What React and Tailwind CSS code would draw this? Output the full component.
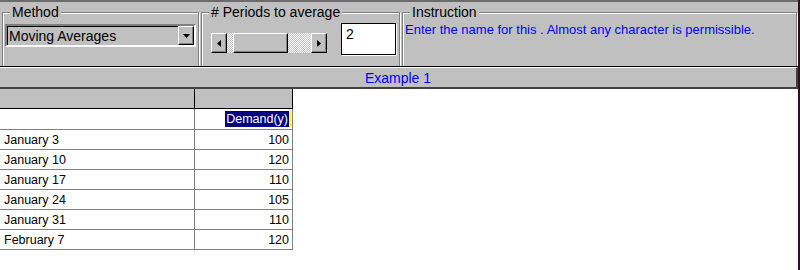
import React from "react";

const font = { fontFamily: '"Liberation Sans", Arial, sans-serif' };

const rows = [
  ["January 3", "100"],
  ["January 10", "120"],
  ["January 17", "110"],
  ["January 24", "105"],
  ["January 31", "110"],
  ["February 7", "120"],
];

function Raised({ className = "", children }) {
  return (
    <div
      className={
        "flex items-center justify-center bg-[#c0c0c0] border border-t-white border-l-white border-b-black border-r-black shadow-[inset_-1px_-1px_0_#808080] " +
        className
      }
    >
      {children}
    </div>
  );
}

function Group({ label, className = "", children }) {
  return (
    <div
      className={
        "h-[56px] shrink-0 border border-[#808080] shadow-[inset_1px_1px_0_#fff,1px_1px_0_#fff] " +
        className
      }
    >
      <div className="-mt-[9px] ml-[7px] w-fit bg-[#c0c0c0] px-[2px] text-[14px] leading-[16px] text-black">
        {label}
      </div>
      {children}
    </div>
  );
}

export default function App() {
  return (
    <div className="flex h-[270px] w-[800px] bg-white" style={font}>
      <div className="flex w-[798px] flex-col">
        {/* top panels */}
        <div className="flex h-[66px] gap-[2px] overflow-hidden border-t-2 border-[#6b6b6b] bg-[#c0c0c0] pl-[2px] pt-[10px]">
          <Group label="Method" className="w-[197px]">
            <div className="ml-[2px] mt-[4px] flex h-[23px] w-[191px] items-center border-2 border-t-[#808080] border-l-[#808080] border-b-white border-r-white bg-[#c0c0c0] shadow-[inset_1px_1px_0_#000]">
              <span className="flex-1 pl-[2px] text-[14px] leading-[16px] text-black">
                Moving Averages
              </span>
              <Raised className="h-[19px] w-[16px]">
                <svg width="7" height="4" viewBox="0 0 7 4">
                  <polygon points="0,0 7,0 3.5,4" fill="#000" />
                </svg>
              </Raised>
            </div>
          </Group>

          <Group label="# Periods to average" className="w-[199px]">
            <div className="ml-[9px] mt-[3px] flex items-start">
              <div className="mt-[10px] flex h-[20px]">
                <Raised className="h-[20px] w-[16px]">
                  <svg width="4" height="7" viewBox="0 0 4 7">
                    <polygon points="4,0 4,7 0,3.5" fill="#000" />
                  </svg>
                </Raised>
                <div className="w-[6px] bg-[repeating-conic-gradient(#fff_0_25%,#c0c0c0_0_50%)] bg-[length:2px_2px]" />
                <Raised className="h-[20px] w-[55px]" />
                <div className="w-[23px] bg-[repeating-conic-gradient(#fff_0_25%,#c0c0c0_0_50%)] bg-[length:2px_2px]" />
                <Raised className="h-[20px] w-[16px]">
                  <svg width="4" height="7" viewBox="0 0 4 7">
                    <polygon points="0,0 4,3.5 0,7" fill="#000" />
                  </svg>
                </Raised>
              </div>
              <div className="ml-[14px] h-[32px] w-[55px] border border-black bg-white pl-[4px] pt-[2px] text-[14px] leading-[16px] text-black shadow-[1px_1px_0_#fff]">
                2
              </div>
            </div>
          </Group>

          <Group label="Instruction" className="w-[395px]">
            <div className="ml-[2px] mt-[2px] text-[13px] leading-[16px] text-[#0000ff]">
              Enter the name for this . Almost any character is permissible.
            </div>
          </Group>
        </div>

        {/* title bar */}
        <div className="border-t border-black">
          <div className="flex h-[22px] items-center justify-center border-t border-r-2 border-b-2 border-t-white border-r-[#404040] border-b-[#404040] bg-[#c0c0c0] text-[14px] leading-[16px] text-[#0000ff]">
            Example 1
          </div>
        </div>

        {/* grid */}
        <div className="flex flex-col text-[12.5px] leading-[14px] text-black">
          <div className="flex h-[20px]">
            <div className="w-[195px] border-r border-b border-black bg-[#c0c0c0]" />
            <div className="w-[98px] border-r border-b border-black bg-[#c0c0c0]" />
          </div>
          <div className="flex h-[21px]">
            <div className="w-[195px] border-r border-b border-[#808080]" />
            <div className="flex w-[98px] items-center justify-end border-r border-b border-[#808080] pr-[1px]">
              <span className="flex h-[16px] items-center bg-[#000080] px-[1px] text-white">
                Demand(y)
              </span>
              <span className="h-[16px] w-[2px] bg-[#ffff00]" />
            </div>
          </div>
          {rows.map(([d, v]) => (
            <div key={d} className="flex h-[20px]">
              <div className="flex w-[195px] items-center border-r border-b border-[#808080] pl-[4px]">
                {d}
              </div>
              <div className="flex w-[98px] items-center justify-end border-r border-b border-[#808080] pr-[3px]">
                {v}
              </div>
            </div>
          ))}
        </div>
      </div>
      <div className="w-[2px] bg-[#3a0a22]" />
    </div>
  );
}
